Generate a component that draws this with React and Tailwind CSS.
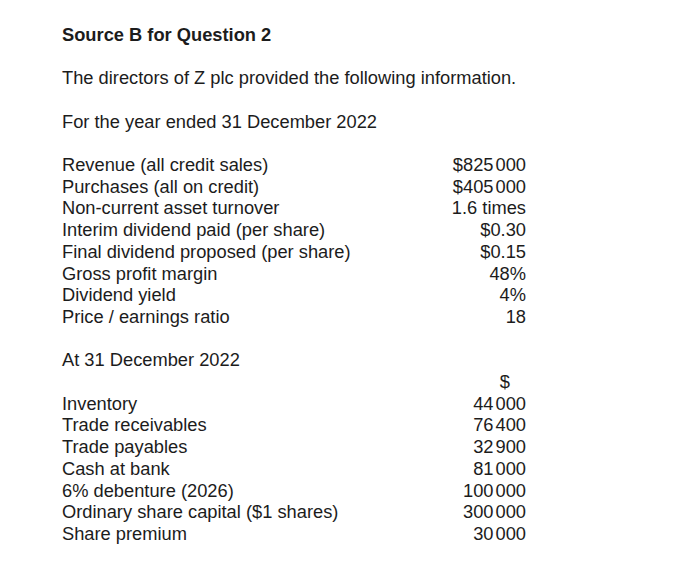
import React from "react";

const YEAR_ROWS = [
  ["Revenue (all credit sales)", ["$825", "000"]],
  ["Purchases (all on credit)", ["$405", "000"]],
  ["Non-current asset turnover", ["1.6 times"]],
  ["Interim dividend paid (per share)", ["$0.30"]],
  ["Final dividend proposed (per share)", ["$0.15"]],
  ["Gross profit margin", ["48%"]],
  ["Dividend yield", ["4%"]],
  ["Price / earnings ratio", ["18"]],
];

const BALANCE_ROWS = [
  ["Inventory", ["44", "000"]],
  ["Trade receivables", ["76", "400"]],
  ["Trade payables", ["32", "900"]],
  ["Cash at bank", ["81", "000"]],
  ["6% debenture (2026)", ["100", "000"]],
  ["Ordinary share capital ($1 shares)", ["300", "000"]],
  ["Share premium", ["30", "000"]],
];

function Amount({ parts }) {
  return (
    <span>
      {parts[0]}
      {parts[1] && <span className="ml-[2px]">{parts[1]}</span>}
    </span>
  );
}

function Row({ label, value }) {
  return (
    <div className="flex justify-between">
      <span>{label}</span>
      <Amount parts={value} />
    </div>
  );
}

export default function App() {
  return (
    <div
      className="w-[679px] h-[571px] bg-white text-[#1c1c1c] text-[18.3px] leading-[21.7px] pl-[62px] pt-[23.5px]"
      style={{ fontFamily: '"Liberation Sans", Arial, sans-serif' }}
    >
      <div className="w-[464px]">
        <div className="font-bold">Source B for Question 2</div>
        <div className="mt-[22px]">The directors of Z plc provided the following information.</div>
        <div className="mt-[21.7px]">For the year ended 31 December 2022</div>

        <div className="mt-[21.7px]">
          {YEAR_ROWS.map(([label, value]) => (
            <Row key={label} label={label} value={value} />
          ))}
        </div>

        <div className="mt-[21.7px]">At 31 December 2022</div>
        <div className="flex justify-end pr-[16px]">$</div>
        {BALANCE_ROWS.map(([label, value]) => (
          <Row key={label} label={label} value={value} />
        ))}
      </div>
    </div>
  );
}
